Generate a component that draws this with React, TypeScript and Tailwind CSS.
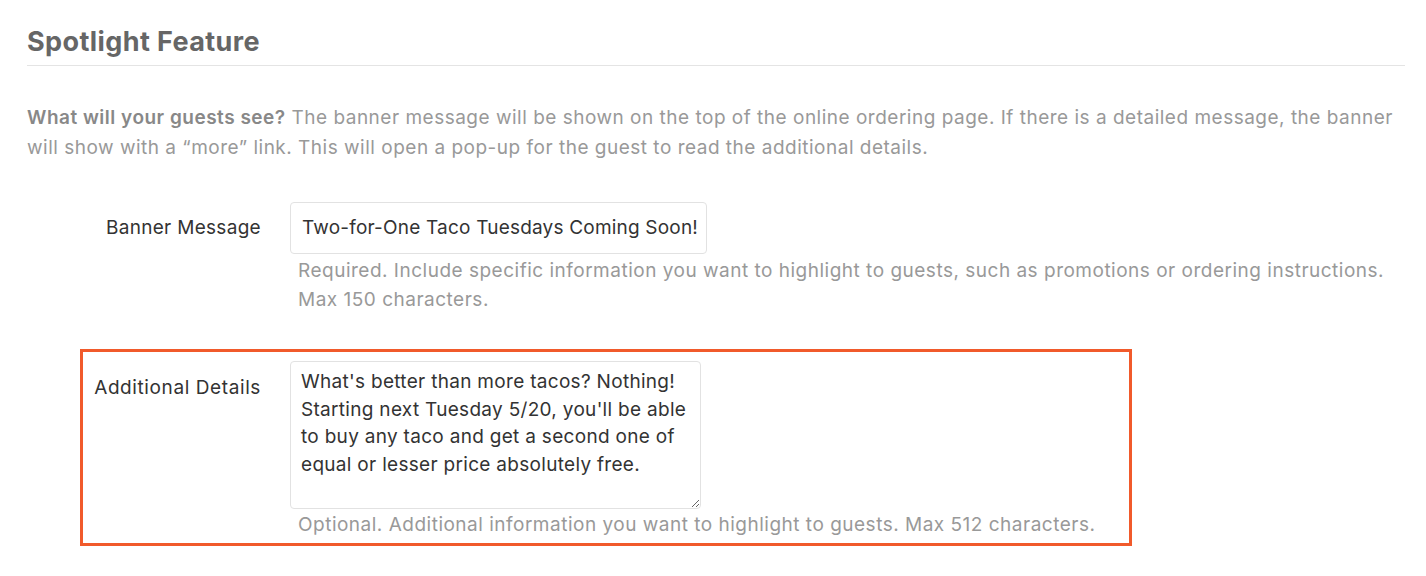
export default function App() {
  return (
    <div
      className="w-[1426px] h-[576px] bg-white pl-[27px] pr-[21px] pt-[24px] overflow-hidden"
      style={{ fontFamily: "Inter, 'Noto Sans', sans-serif" }}
    >
      <h2 className="text-[27px] font-bold leading-[36px] tracking-[0.4px] text-[#666] pb-[5px] border-b border-[#e4e4e4]">
        Spotlight Feature
      </h2>
      <p className="mt-[37px] text-[19px] leading-[30px] tracking-[0.5px] text-[#999]">
        <span className="font-semibold text-[#888]">What will your guests see?</span> The banner message will be shown on
        the top of the online ordering page. If there is a detailed message, the banner will show with a “more” link. This
        will open a pop-up for the guest to read the additional details.
      </p>

      <div className="mt-[39px] flex">
        <div className="w-[234px] shrink-0 h-[52px] flex items-center justify-end text-[19px] tracking-[0.3px] text-[#333]">
          Banner Message
        </div>
        <div className="ml-[29px] flex flex-col">
          <input
            readOnly
            defaultValue="Two-for-One Taco Tuesdays Coming Soon!"
            className="w-[417px] h-[52px] border border-[#e2e2e2] rounded-[4px] pl-[11px] pr-[2px] pb-[1px] text-[19px] tracking-[0.2px] text-[#333] outline-none"
            style={{ fontFamily: "Inter, 'Noto Sans', sans-serif" }}
          />
          <div className="mt-[2px] ml-[8px] text-[19px] leading-[29px] tracking-[0.5px] text-[#999]">
            Required. Include specific information you want to highlight to guests, such as promotions or ordering
            instructions.
            <br />
            Max 150 characters.
          </div>
        </div>
      </div>

      <div className="mt-[35px] ml-[53px] w-[1052px] border-[3px] border-[#f15a2b] flex pt-[9px] pb-[4px]">
        <div className="w-[178px] shrink-0 pt-[13px] text-right text-[19px] leading-[27px] tracking-[0.6px] text-[#333]">
          Additional Details
        </div>
        <div className="ml-[29px] flex flex-col">
          <textarea
            readOnly
            defaultValue={
              "What's better than more tacos? Nothing! Starting next Tuesday 5/20, you'll be able to buy any taco and get a second one of equal or lesser price absolutely free."
            }
            className="w-[411px] h-[148px] border border-[#e2e2e2] rounded-[4px] px-[10px] pt-[6px] text-[19px] leading-[27.5px] tracking-[0.3px] text-[#333] outline-none"
            style={{ fontFamily: "Inter, 'Noto Sans', sans-serif" }}
          />
          <div className="mt-[2px] ml-[8px] text-[19px] leading-[28px] tracking-[0.5px] text-[#999]">
            Optional. Additional information you want to highlight to guests. Max 512 characters.
          </div>
        </div>
      </div>
    </div>
  );
}
